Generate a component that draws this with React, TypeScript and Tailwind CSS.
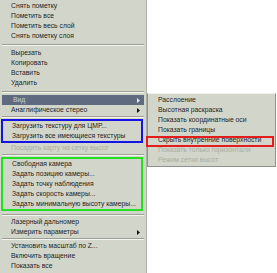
import React from "react";

type Item = { t: string; arrow?: boolean; dis?: boolean; hl?: boolean };

const Row = ({ t, arrow, dis, hl }: Item) => (
  <div
    className={`relative flex h-[10px] items-center pl-[11px] pr-[4px] leading-none whitespace-nowrap ${
      hl ? "mx-[2px] bg-[#5f6a80] pl-[9px] text-[#c9ced6]" : dis ? "text-[#a9ada2]" : "text-[#1e1e1e]"
    }`}
  >
    <span className="flex-1">{t}</span>
    {arrow && (
      <svg width="3" height="5" viewBox="0 0 3 5" className={hl ? "mr-[0px]" : "mr-[2px]"}>
        <path d="M0 0 L3 2.5 L0 5 Z" fill={hl ? "#e8ecf0" : "#111"} />
      </svg>
    )}
  </div>
);

const Sep = ({ h, top }: { h: string; top: string }) => (
  <div className={`${h} ${top} px-[2px]`}>
    <div className="h-px bg-[#9c9f96]" />
    <div className="h-px bg-[#f4f6f0]" />
  </div>
);

export default function App() {
  return (
    <div
      className="relative h-[273px] w-[277px] overflow-hidden bg-white text-[6.8px]"
      style={{ fontFamily: '"Liberation Sans", Arial, sans-serif' }}
    >
      <div className="flex h-[273px] w-[147px] flex-col border-r border-[#aeb2a6] bg-[#d2d6ca] pt-[1px]">
        <Row t="Снять пометку" />
        <Row t="Пометить все" />
        <Row t="Пометить весь слой" />
        <Row t="Снять пометку слоя" />
        <Sep h="h-[7px]" top="pt-[3px]" />
        <Row t="Вырезать" />
        <Row t="Копировать" />
        <Row t="Вставить" />
        <Row t="Удалить" />
        <Sep h="h-[7px]" top="pt-[3px]" />
        <Row t="Вид" arrow hl />
        <Row t="Анаглифическое стерео" arrow />
        <Sep h="h-[4px]" top="pt-[1px]" />
        <div className="mx-[1px] w-[142px] border-2 border-[#1414e6] py-0">
          <div className="-ml-[2px]">
            <Row t="Загрузить текстуру для ЦМР..." />
            <Row t="Загрузить все имеющиеся текстуры" />
          </div>
        </div>
        <Row t="Посадить карту на сетку высот" dis />
        <Sep h="h-[4px]" top="pt-[1px]" />
        <div className="mx-[1px] w-[142px] border-2 border-[#22e022]">
          <div className="-ml-[2px]">
            <Row t="Свободная камера" />
            <Row t="Задать позицию камеры..." />
            <Row t="Задать точку наблюдения" />
            <Row t="Задать скорость камеры..." />
            <Row t="Задать минимальную высоту камеры..." />
          </div>
        </div>
        <Sep h="h-[6px]" top="pt-[3px]" />
        <Row t="Лазерный дальномер" />
        <Row t="Измерить параметры" arrow />
        <Sep h="h-[4px]" top="pt-[1px]" />
        <Row t="Установить масштаб по Z..." />
        <Row t="Включить вращение" />
        <Row t="Показать все" />
      </div>

      <div className="absolute left-[147px] top-[93px] flex h-[74px] w-[129px] flex-col border border-t-[#eef0ea] border-l-[#8e9288] border-r-[#8e9288] border-b-[#8e9288] bg-[#d2d6ca] pt-[1px]">
        <div className="-ml-px">
          <Row t="Расслоение" />
          <Row t="Высотная раскраска" />
          <Row t="Показать координатные оси" />
          <Row t="Показать границы" />
          <Row t="Скрыть внутренние поверхности" />
          <Row t="Показать только горизонтали" dis />
          <Row t="Режим сетки высот" dis />
        </div>
      </div>
      <div className="absolute left-[146px] top-[136px] h-[11px] w-[128px] border-2 border-[#e41c1c]" />
    </div>
  );
}
